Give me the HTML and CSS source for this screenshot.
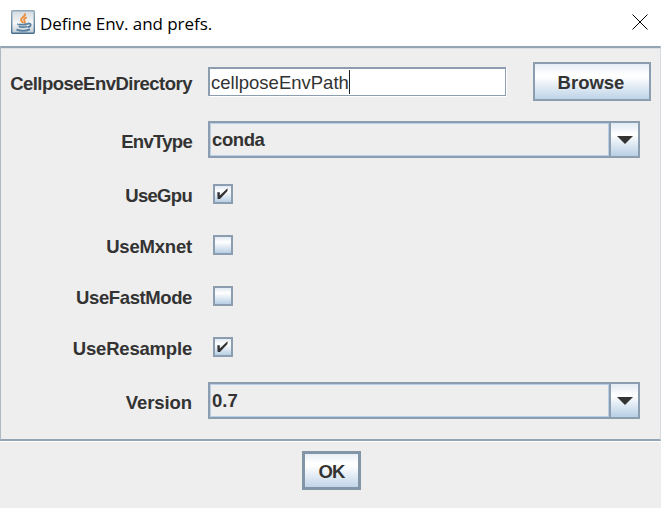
FILE: index.html
```html
<!DOCTYPE html>
<html lang="en">
<head>
<meta charset="utf-8">
<title>Define Env. and prefs.</title>
<link rel="stylesheet" href="styles.css">
</head>
<body>
<div class="window">
  <header class="titlebar">
    <svg class="app-icon" width="24" height="24" viewBox="0 0 24 24">
      <defs><linearGradient id="tile" x1="0" y1="0" x2="0" y2="1"><stop offset="0" stop-color="#d3dae0"/><stop offset=".55" stop-color="#f5f6f7"/><stop offset="1" stop-color="#bfcbd4"/></linearGradient>
      <linearGradient id="edge" x1="0" y1="0" x2="0" y2="1"><stop offset="0" stop-color="#92a9b9"/><stop offset="1" stop-color="#486f8e"/></linearGradient></defs>
      <rect x=".7" y=".7" width="22.6" height="22.6" rx="1" fill="url(#tile)" stroke="url(#edge)" stroke-width="1.4"/>
      <path d="M14 3.500c1 3-4.500 4-4 6.300.2 1.200 1.700 2 1.700 3.200M15.800 7.300c-3 1.200-3.300 2.400-2.200 3.700.6.9.2 1.700-.6 2.300" fill="none" stroke="#ee8d3c" stroke-width="1.900"/>
      <path d="M7 13.800c-1 1 6 1.300 9.500 0M7.700 16.500c2.500.9 6 .8 8.500 0M5.500 19.700c3.500 1.300 9.500 1.300 13.500-.4M16.500 13.600c4.500-.8 4 2.900 0 3.500" fill="none" stroke="#587f9f" stroke-width="1.800"/>
    </svg>
    <h1 class="title">Define Env. and prefs.</h1>
    <svg class="close" width="16" height="16" viewBox="0 0 16 16"><path d="M.5.5l15 15M15.500.5l-15 15" stroke="#000" stroke-width="1"/></svg>
  </header>
  <main class="form">
    <div class="row row-path"><label class="label l-dir">CellposeEnvDirectory</label><div class="field"><span class="field-text">cellposeEnvPath</span><i class="caret"></i></div><button class="button browse"><span>Browse</span></button></div>
    <div class="row row-type"><label class="label l-type">EnvType</label><div class="combo"><span class="value v-conda">conda</span><span class="arrow"><svg width="16" height="8" viewBox="0 0 16 8"><path d="M0 0h16L8 8z" fill="#333"/></svg></span></div></div>
    <div class="row row-check"><label class="label l-gpu">UseGpu</label><span class="check"><svg width="20" height="20" viewBox="0 0 20 20"><path d="M4.300 8.200h2.500v3.200L14.500 4.200v2.800L7 15H4.600z" fill="#333"/></svg></span></div>
    <div class="row row-check-tall"><label class="label l-mx">UseMxnet</label><span class="check"></span></div>
    <div class="row row-check"><label class="label l-fast">UseFastMode</label><span class="check"></span></div>
    <div class="row row-check-tall"><label class="label l-res">UseResample</label><span class="check"><svg width="20" height="20" viewBox="0 0 20 20"><path d="M4.300 8.200h2.500v3.200L14.500 4.200v2.800L7 15H4.600z" fill="#333"/></svg></span></div>
    <div class="row row-version"><label class="label l-ver">Version</label><div class="combo"><span class="value v-num">0.7</span><span class="arrow"><svg width="16" height="8" viewBox="0 0 16 8"><path d="M0 0h16L8 8z" fill="#333"/></svg></span></div></div>
  </main>
  <footer class="actions"><button class="button ok"><span>OK</span></button></footer>
</div>
</body>
</html>
```
FILE: styles.css
```css
* { box-sizing: border-box; }
body { margin: 0; background: #eee; font-family: "Liberation Sans", Arial, sans-serif; font-size: 18.5px; font-weight: bold; line-height: 22px; color: #333; overflow: hidden; }
.window { width: 661px; height: 508px; display: flex; flex-direction: column; }
.titlebar { height: 46px; background: #fff; display: flex; align-items: center; padding: 0 13px 2px 11px; flex: none; }
.app-icon { flex: none; }
.title { margin: 3px auto 0 5px; font: 400 17px/24px "Open Sans", "Noto Sans", sans-serif; letter-spacing: -0.06px; color: #000; }
.close { flex: none; }
.form { height: 395px; flex: none; padding-top: 6px; border-top: 2px solid #94a4b3; border-left: 1px solid #b0bac5; border-right: 1px solid #d4dae0; border-bottom: 2px solid #94a4b3; box-shadow: inset 0 1px #dce1e6, 0 1px #fff; }
.row { display: flex; align-items: center; }
.row-path { height: 55px; }
.row-type { height: 61px; }
.row-check { height: 48px; }
.row-check-tall { height: 54px; }
.row-version { height: 53px; }
.label { width: 191px; margin-right: 15px; text-align: right; white-space: nowrap; padding-top: 3px; flex: none; }
.l-dir { letter-spacing: -0.52px; padding-top: 4px; }
.l-type { letter-spacing: -0.7px; padding-top: 4px; }
.l-gpu { letter-spacing: -0.7px; }
.l-mx { letter-spacing: -0.2px; }
.l-fast { letter-spacing: -0.4px; }
.l-res { letter-spacing: -0.2px; }
.l-ver { letter-spacing: -0.1px; padding-top: 4px; }
.field { width: 298px; height: 29px; margin: 0 27px 0 1px; background: #fff; border: 2px solid #8b9dae; border-right-width: 1px; border-bottom-width: 1px; box-shadow: 1px 1px #fff; display: flex; align-items: center; padding-left: 1px; font-weight: normal; }
.field-text { padding-top: 2px; letter-spacing: 0; }
.caret { width: 1px; height: 24px; background: #222; }
.button { font: inherit; color: #333; padding: 0; border: 2px solid #8b9dae; border-radius: 0; background: linear-gradient(#e2eaf3 0, #fff 32%, #fff 38%, #b8cfe5 100%) border-box; display: flex; align-items: center; justify-content: center; }
.button span { padding-top: 2px; }
.browse { width: 118px; height: 39px; }
.browse span { margin-right: 2px; padding-top: 3px; }
.combo { width: 432px; height: 37px; margin-left: 1px; border: 2px solid #8b9dae; display: flex; }
.value { flex: 1; padding: 5px 0 0 1px; border: 1px solid #b8cfe5; }
.v-conda { letter-spacing: -0.4px; }
.arrow { width: 29px; border-left: 2px solid #8b9dae; background: linear-gradient(#e2eaf3 0, #fff 35%, #b8cfe5 100%); display: flex; align-items: center; justify-content: center; }
.check { width: 20px; height: 20px; margin-left: 6px; border: 2px solid #8b9dae; background: linear-gradient(#e2eaf3 0, #fff 32%, #b8cfe5 100%); }
.check svg { display: block; margin: -2px; }
.actions { display: flex; justify-content: center; padding: 10px 0 0 2px; }
.ok { width: 59px; height: 39px; border: 3px solid #8396a8; letter-spacing: -0.8px; }
```
